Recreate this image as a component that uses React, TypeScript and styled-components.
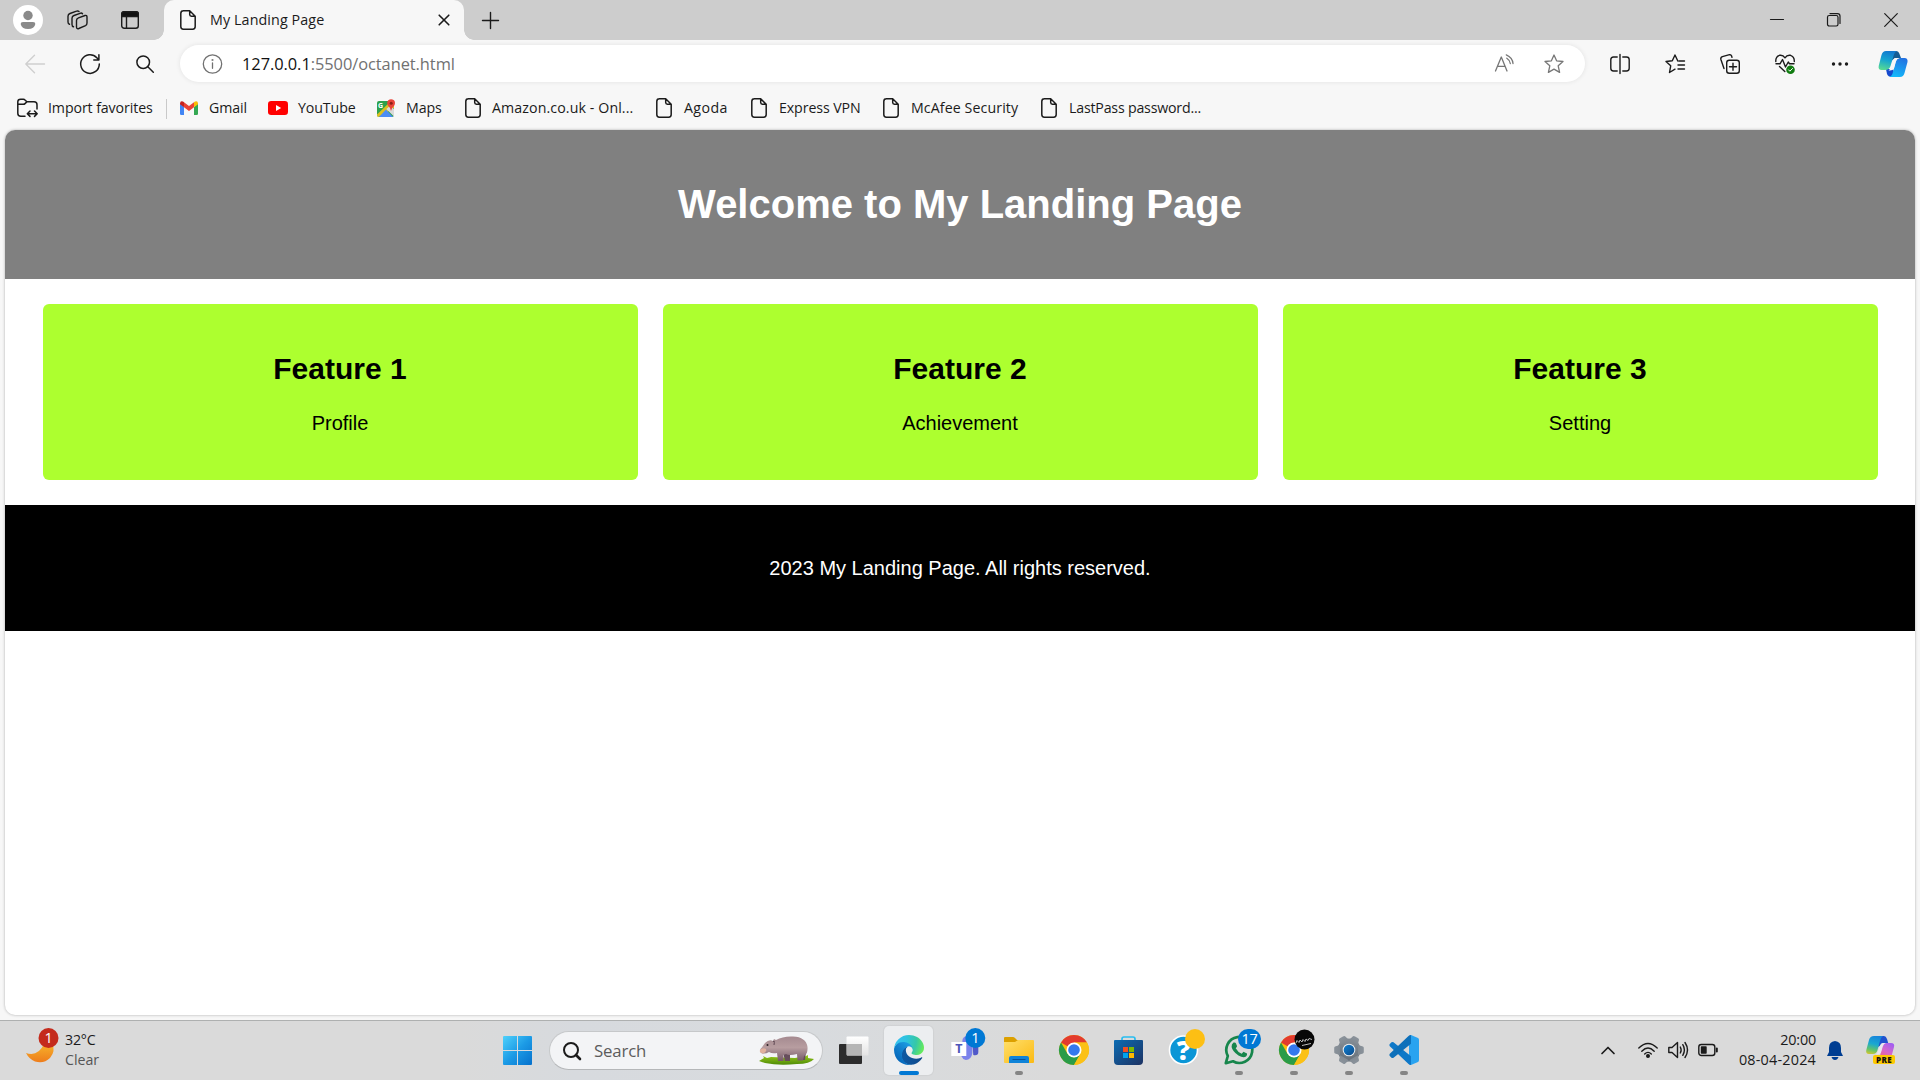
import React from 'react';
import styled, { createGlobalStyle } from 'styled-components';

const GlobalStyle = createGlobalStyle`
  html, body { margin: 0; padding: 0; background: #f7f7f7; }
  * { box-sizing: border-box; }
  svg { display: block; flex: none; overflow: visible; }
`;

const ui = `'Open Sans', 'Noto Sans', sans-serif`;

const Screen = styled.div`
  width: 1920px;
  height: 1080px;
  overflow: hidden;
  display: flex;
  flex-direction: column;
  font-family: ${ui};
  color: #1b1b1b;
`;

/* ---------- browser chrome ---------- */

const TabStrip = styled.div`
  height: 40px;
  flex: none;
  background: #cdcdcd;
  display: flex;
  align-items: center;
`;

const Avatar = styled.div`
  width: 30px;
  height: 30px;
  margin-left: 13px;
  border-radius: 50%;
  background: #fff;
  display: grid;
  place-items: center;
`;

const Slot = styled.div<{ $w: number }>`
  width: ${(p) => p.$w}px;
  height: 100%;
  flex: none;
  display: flex;
  align-items: center;
  justify-content: center;
`;

const Tab = styled.div`
  position: relative;
  width: 300px;
  height: 40px;
  margin-left: 8px;
  padding: 0 13px 0 16px;
  display: flex;
  align-items: center;
  background: #f7f7f7;
  border-radius: 10px 10px 0 0;
  &::before, &::after {
    content: '';
    position: absolute;
    bottom: 0;
    width: 10px;
    height: 10px;
  }
  &::before {
    left: -10px;
    background: radial-gradient(circle at 0 0, transparent 9.5px, #f7f7f7 10px);
  }
  &::after {
    right: -10px;
    background: radial-gradient(circle at 100% 0, transparent 9.5px, #f7f7f7 10px);
  }
`;

const TabTitle = styled.span`
  flex: 1;
  margin-left: 14px;
  padding-bottom: 2px;
  font-size: 14.3px;
  letter-spacing: 0.1px;
  white-space: nowrap;
`;

const WindowControls = styled.div`
  margin-left: auto;
  height: 100%;
  display: flex;
`;

const Toolbar = styled.div`
  height: 47px;
  flex: none;
  display: flex;
  align-items: center;
  background: #f7f7f7;
`;

const NavButtons = styled.div`
  width: 180px;
  height: 100%;
  padding-left: 7px;
  display: flex;
`;

const AddressBar = styled.div`
  width: 1405px;
  height: 37px;
  flex: none;
  border-radius: 19px;
  background: #fff;
  box-shadow: 0 0 5px rgba(0, 0, 0, 0.09);
  display: flex;
  align-items: center;
  padding: 0 6px 0 22px;
`;

const Url = styled.div`
  flex: 1;
  margin-left: 20px;
  font-size: 16.4px;
  letter-spacing: -0.05px;
  color: #717171;
  b { font-weight: 400; color: #111; }
`;

const ToolbarActions = styled.div`
  height: 100%;
  padding-left: 7px;
  display: flex;
`;

const FavoritesBar = styled.div`
  height: 43px;
  flex: none;
  padding-left: 17px;
  display: flex;
  align-items: center;
  background: #f7f7f7;
  > div > svg { margin-top: -1px; }
`;

const Favorite = styled.div<{ $w: number; $gap: number; $ls?: number }>`
  width: ${(p) => p.$w}px;
  flex: none;
  display: flex;
  align-items: center;
  font-size: 14.2px;
  letter-spacing: ${(p) => p.$ls ?? -0.1}px;
  white-space: nowrap;
  > span { margin-left: ${(p) => p.$gap}px; padding-bottom: 2px; }
`;

const Divider = styled.i`
  width: 1px;
  height: 20px;
  margin-right: 13px;
  background: #c9c9c9;
`;

/* ---------- web page ---------- */

const Viewport = styled.div`
  height: 890px;
  flex: none;
  padding: 0 5px 5px;
  background: #f7f7f7;
`;

const Page = styled.main`
  height: 885px;
  border-radius: 10px;
  overflow: hidden;
  background: #fff;
  box-shadow: 0 0 3px rgba(0, 0, 0, 0.3);
  font-family: 'Liberation Sans', Arial, sans-serif;
  font-size: 20px;
  color: #000;
  text-align: center;
`;

const Hero = styled.header`
  height: 149px;
  padding: 25px;
  background: #808080;
  color: #fff;
  h1 { margin: 26px 0; font-size: 40px; line-height: 46px; }
`;

const Features = styled.section`
  height: 226px;
  padding: 25px 37px 25px 38px;
  display: grid;
  grid-template-columns: repeat(3, 1fr);
  gap: 25px;
`;

const Card = styled.article`
  padding: 25px 26px 25px 25px;
  border-radius: 6px;
  background: #adff2f;
  h2 { margin: 23px 0 26px; font-size: 30px; line-height: 34px; }
  p { margin: 0; line-height: 23px; }
`;

const PageFooter = styled.footer`
  height: 126px;
  padding: 51px 25px;
  background: #000;
  color: #fff;
  p { margin: 0; line-height: 24px; }
`;

/* ---------- taskbar ---------- */

const Taskbar = styled.footer`
  height: 60px;
  flex: none;
  border-top: 1px solid #aeb0b0;
  background: linear-gradient(90deg, #dadada 0, #dadada 24%, #d7dade 30%, #d8dbde 42%, #dadada 55%, #dadada 100%);
  display: flex;
  align-items: center;
`;

const Weather = styled.div`
  width: 503px;
  padding: 0 0 1px 26px;
  display: flex;
  align-items: center;
  gap: 11px;
  font-size: 14.2px;
  line-height: 20px;
  letter-spacing: -0.2px;
  > svg { margin-top: -2px; }
  span { display: block; }
  span + span { color: #555; letter-spacing: 0; }
`;

const SearchBox = styled.div`
  width: 274px;
  height: 39px;
  margin: 0 16px 0 17px;
  padding: 0 8px 0 13px;
  border: 1px solid #c6c8ca;
  border-bottom-color: #b5b7b9;
  border-radius: 20px;
  background: #f3f4f6;
  display: flex;
  align-items: center;
  span { flex: 1; margin-left: 13px; font-size: 16.8px; letter-spacing: -0.15px; color: #5c5c5c; }
`;

const Apps = styled.div`
  margin-left: 12px;
  height: 59px;
  display: flex;
`;

const AppButton = styled.div<{ $state?: 'active' | 'open' }>`
  position: relative;
  width: 49px;
  height: 49px;
  margin: 5px 3px;
  padding-bottom: 1px;
  border-radius: 5px;
  display: grid;
  place-items: center;
  background: ${(p) => (p.$state === 'active' ? '#eceef0' : 'transparent')};
  box-shadow: ${(p) => (p.$state === 'active' ? '0 0 1px 1px rgba(0,0,0,.04)' : 'none')};
  &::after {
    content: '';
    position: absolute;
    bottom: 0;
    left: 50%;
    transform: translateX(-50%);
    height: 4px;
    border-radius: 2px;
    width: ${(p) => (p.$state === 'active' ? 20 : p.$state ? 8 : 0)}px;
    background: ${(p) => (p.$state === 'active' ? '#0078d4' : '#858585')};
  }
`;

const Tray = styled.div`
  margin-left: auto;
  padding: 0 25px 1px 0;
  display: flex;
  align-items: center;
`;

const Clock = styled.div`
  width: 93px;
  margin-right: 11px;
  padding-bottom: 1px;
  text-align: right;
  font-size: 14.4px;
  line-height: 20px;
  white-space: nowrap;
  span { display: block; letter-spacing: -0.2px; }
  span + span { letter-spacing: 0.2px; }
`;

/* ---------- icons ---------- */

type IconProps = { w?: number; h?: number; c?: string; s?: number; children: React.ReactNode };
const Icon = ({ w = 20, h = 20, c = '#1b1b1b', s = 1.4, children }: IconProps) => (
  <svg width={w} height={h} viewBox={`0 0 ${w} ${h}`} fill="none" stroke={c} strokeWidth={s} strokeLinecap="round" strokeLinejoin="round">
    {children}
  </svg>
);

const DocIcon = () => (
  <Icon w={16} s={1.5}>
    <path d="M3.2.8H9.7L15.2 6.3V16.6Q15.2 19.2 12.6 19.2H3.4Q.8 19.2.8 16.6V3.4Q.8.8 3.4.8M9.7.9V4.6Q9.7 6.3 11.4 6.3H15.1" />
  </Icon>
);

const starPath = 'M10 1 12.6 6.8 19 7.5 14.2 11.8 15.6 18.4 10 15.1 4.4 18.4 5.8 11.8 1 7.5 7.4 6.8Z';

const ChromeLogo = () => (
  <svg width="30" height="30" viewBox="0 0 30 30">
    <circle cx="15" cy="15" r="15" fill="#fbbc0a" />
    <path d="M15 15 2 7.5A15 15 0 0 1 28 7.5L15 7.5Z" fill="#e33b2e" />
    <path d="M2 7.5A15 15 0 0 0 15 30L21.500 18.800 15 22.500 8.500 18.800Z" fill="#2a9c48" />
    <path d="M15 30A15 15 0 0 0 28 7.5H15L21.500 18.800Z" fill="#fbc116" />
    <circle cx="15" cy="15" r="7.5" fill="#fff" />
    <circle cx="15" cy="15" r="5.8" fill="#3478ed" />
  </svg>
);

const EdgeLogo = () => (
  <svg width="30" height="30" viewBox="0 0 256 256">
    <defs>
      <linearGradient id="e1" x1="63" y1="177" x2="241" y2="177" gradientUnits="userSpaceOnUse"><stop stopColor="#0c59a4" /><stop offset="1" stopColor="#114a8b" /></linearGradient>
      <linearGradient id="e2" x1="157" y1="100" x2="46" y2="221" gradientUnits="userSpaceOnUse"><stop stopColor="#1b9de2" /><stop offset=".5" stopColor="#1180ce" /><stop offset="1" stopColor="#0669bc" /></linearGradient>
      <radialGradient id="e3" cx="26" cy="45" r="235" gradientUnits="userSpaceOnUse"><stop stopColor="#35c1f1" /><stop offset=".35" stopColor="#2ec3df" /><stop offset=".7" stopColor="#36c8a7" /><stop offset="1" stopColor="#66eb5a" /></radialGradient>
    </defs>
    <path fill="url(#e1)" d="M235.700 190.500a93.700 93.700 0 0 1-10.600 4.700 101.900 101.900 0 0 1-35.900 6.500c-47.300 0-88.500-32.500-88.500-74.300a31.500 31.500 0 0 1 16.400-27.300c-42.800 1.800-53.800 46.400-53.800 72.500 0 73.900 68.100 81.400 82.800 81.400 7.900 0 19.800-2.300 27-4.600l1.300-.4a128.300 128.300 0 0 0 66.600-52.800 4 4 0 0 0-5.300-5.700Z" />
    <path fill="url(#e2)" d="M105.700 241.400a79.200 79.200 0 0 1-22.700-21.300 80.700 80.700 0 0 1 29.500-120c3.200-1.500 8.500-4.100 15.600-4a32.400 32.400 0 0 1 25.700 13 31.900 31.900 0 0 1 6.300 18.700c0-.2 24.500-79.600-80-79.600C36.200 48.200.1 89.900.1 126.400a130.200 130.200 0 0 0 12.100 56 128 128 0 0 0 156.400 67.100 75.500 75.500 0 0 1-62.800-8Z" />
    <path fill="url(#e3)" d="M152.300 148.900c-.8 1-3.300 2.500-3.300 5.700 0 2.600 1.700 5.100 4.700 7.200 14.400 10 41.500 8.700 41.600 8.700a59.600 59.600 0 0 0 30.300-8.300 61.400 61.400 0 0 0 30.400-52.900c.3-22.400-8-37.300-11.300-43.900C223.500 23.900 177.700 0 128 0A128 128 0 0 0 0 126.200c.5-36.500 36.800-66 80-66 3.500 0 23.500.3 42 10.100 16.300 8.600 24.900 18.900 30.800 29.200 6.200 10.700 7.300 24.100 7.300 29.500s-2.700 13.300-7.800 19.900Z" />
  </svg>
);

const CopilotLogo = () => (
  <svg width="30" height="26" viewBox="0 0 30 26">
    <defs>
      <linearGradient id="c1" x1="10" y1="0" x2="5" y2="20" gradientUnits="userSpaceOnUse"><stop stopColor="#1279cf" /><stop offset=".45" stopColor="#16a5d0" /><stop offset="1" stopColor="#5fe08c" /></linearGradient>
      <linearGradient id="c2" x1="26" y1="7" x2="19" y2="26" gradientUnits="userSpaceOnUse"><stop stopColor="#2470e0" /><stop offset="1" stopColor="#14b8fa" /></linearGradient>
    </defs>
    <path d="M15 0H18Q20.500 0 21.500 3L23 7H17L12 11 9 6Z" fill="#145c94" />
    <path d="M8 18H15L17 24Q17 26 14 26 10 26 9 23Z" fill="#1649ce" />
    <path d="M8 0H19Q16.500 1 15.500 5L12.500 15Q11.300 19 7 19H3.500Q0 19 .7 15L3.500 4Q4.700 0 8 0Z" fill="url(#c1)" />
    <path d="M22 7H26.500Q30 7 29.500 11L26.500 22Q25.500 26 22 26H11Q14 25.500 15 21L17.500 11Q18.500 7 22 7Z" fill="url(#c2)" />
    <path d="M17.500 7H21.500Q18.800 7.500 18 10.500L16 17.500Q15 19.500 12 19.500H10.500Q12.500 18 13.200 15.500L15 9.500Q15.700 7 17.500 7Z" fill="#f7f7f7" />
  </svg>
);

const CopilotPreview = () => (
  <svg width="29" height="28" viewBox="0 0 29 28">
    <defs>
      <linearGradient id="p1" x1="10" y1="0" x2="5" y2="20" gradientUnits="userSpaceOnUse"><stop stopColor="#1685db" /><stop offset=".4" stopColor="#1ba8d0" /><stop offset=".7" stopColor="#62c46b" /><stop offset="1" stopColor="#f4c71d" /></linearGradient>
      <linearGradient id="p2" x1="25" y1="7" x2="15" y2="24" gradientUnits="userSpaceOnUse"><stop stopColor="#a05df2" /><stop offset=".5" stopColor="#d767c9" /><stop offset="1" stopColor="#f5656e" /></linearGradient>
    </defs>
    <path d="M13 0H18Q20 0 21 3L22.500 8H17L12 11Z" fill="#2052cf" />
    <path d="M8 0H17Q15 1 14 5L11.500 14Q10.500 18 7 18H3Q-.5 18 .3 14L3 4Q4 0 8 0Z" fill="url(#p1)" />
    <path d="M20 7H25Q29 7 28 11L25 22H10L14 20 16 11Q17 7 20 7Z" fill="url(#p2)" />
    <path d="M16.500 7H20Q17.500 7.500 16.800 10.500L15 16.500Q14 18.500 11.500 18.500H10Q11.500 17 12.200 14.500L14 9.500Q14.700 7 16.500 7Z" fill="#e9e6ee" />
    <rect x="7" y="19" width="22" height="9" rx="2" fill="#fcc900" />
    <text x="18" y="26.600" textAnchor="middle" fontFamily="Open Sans, sans-serif" fontWeight="800" fontSize="8" letterSpacing=".4" fill="#15120a">PRE</text>
  </svg>
);

const Hippo = () => (
  <svg width="55" height="29" viewBox="0 0 55 29">
    <defs>
      <linearGradient id="hp" x1="0" y1="0" x2="0" y2="1"><stop stopColor="#a58a90" /><stop offset=".45" stopColor="#b79da0" /><stop offset="1" stopColor="#755a68" /></linearGradient>
      <linearGradient id="gr" x1="0" y1="0" x2="0" y2="1"><stop stopColor="#9acb1c" /><stop offset="1" stopColor="#4e8a07" /></linearGradient>
    </defs>
    <path d="M0 25 5 22 4 20 8 22 12 21 36 22 41 21 43 19 45 21 49 19 49 22 55 23Q51 28 38 28 20 30 6 27Z" fill="url(#gr)" />
    <path d="M38 16H47L46 24H41ZM24 16H31V25H26Z" fill="#674e5c" />
    <path d="M14 5 15 3 17 4Q24 0 34 .5 47 1 48.500 11 49 18 45 20L44 24.500H38.500L38 18Q30 20 27 18L24.500 19V25H19L18 17Q13 18 10 16 7 18 3 17.500 0 16 1.500 13 4 10 6 7 10 3 14 5Z" fill="url(#hp)" />
    <path d="M1 14Q4 11 7 13 8 16 4 17.500 0 17 1 14Z" fill="#e2b19e" />
    <circle cx="8.500" cy="9" r="1" fill="#2d2329" />
    <path d="M14 6Q16 3 15 9" stroke="#5f4853" fill="none" />
  </svg>
);

const Badge = ({ x, y, rx = 10, fill = '#0078d4', label }: { x: number; y: number; rx?: number; fill?: string; label?: string }) => (
  <g>
    <rect x={x - rx} y={y - 10} width={rx * 2} height={20} rx={10} fill={fill} />
    {label && <text x={x} y={y + 5} textAnchor="middle" fontFamily="Open Sans, sans-serif" fontSize="14.500" letterSpacing="-.3" fill="#fff">{label}</text>}
  </g>
);

const Favicons = {
  import: (
    <Icon w={21} s={1.5}>
      <path d="M8 18.200H3.800Q.8 18.200.8 15.200V3.800Q.8 1.200 3.600 1.200H6.500Q7.400 1.200 8 1.900L9.800 3.800H17Q20 3.800 20 6.800V11M.9 6.300H6.400Q7.300 6.300 8 5.600L9.800 3.900M10.500 15.700H20M13 13 10.300 15.700 13 18.400M17.500 13 20.200 15.700 17.500 18.400" />
    </Icon>
  ),
  gmail: (
    <svg width="18" height="14" viewBox="0 0 18 14">
      <path d="M0 2.500V12.700Q0 14 1.300 14H4V6Z" fill="#4285f4" />
      <path d="M18 2.500V12.700Q18 14 16.700 14H14V6Z" fill="#34a853" />
      <path d="M0 2.500Q.2-.7 3 .5L4 1.200V6.200L0 3.200Z" fill="#c5221f" />
      <path d="M18 2.500Q17.800-.7 15 .5L14 1.200V6.200L18 3.200Z" fill="#fbbc04" />
      <path d="M4 1.200 9 5 14 1.200V6.200L9 10 4 6.200Z" fill="#ea4335" />
    </svg>
  ),
  youtube: (
    <svg width="20" height="14" viewBox="0 0 20 14"><rect width="20" height="14" rx="3.200" fill="#f00" /><path d="M8 4 13.200 7 8 10Z" fill="#fff" /></svg>
  ),
  maps: (
    <svg width="19" height="19" viewBox="0 0 19 19">
      <rect y="2" width="17" height="16" rx="2" fill="#2da14d" />
      <path d="M0 15.500 13 3 17 7V9L1.800 18Q0 18 0 16Z" fill="#fbc517" opacity=".85" />
      <path d="M2 18 9 10.500 16 18Z" fill="#4a8cf5" />
      <path d="M9.300 10 17 17.500V10L13 7Z" fill="#dadada" />
      <text x="1" y="8.500" fontFamily="Open Sans, sans-serif" fontSize="7" fontWeight="700" fill="#fff">G</text>
      <path d="M14 12Q13.800 9 11.300 7 9 4 11.300 1.300 14-1 17 1.300 19 4 17 7 14.300 9 14 12Z" fill="#e8453a" />
      <circle cx="14.200" cy="4.200" r="1.500" fill="#8d2018" />
    </svg>
  ),
};

const favorites = [
  { label: 'Gmail', icon: Favicons.gmail, w: 88, gap: 11 },
  { label: 'YouTube', icon: Favicons.youtube, w: 109, gap: 10 },
  { label: 'Maps', icon: Favicons.maps, w: 88, gap: 10 },
  { label: 'Amazon.co.uk - Onl...', icon: <DocIcon />, w: 191, gap: 11, ls: 0.1 },
  { label: 'Agoda', icon: <DocIcon />, w: 95, gap: 12, ls: 0.4 },
  { label: 'Express VPN', icon: <DocIcon />, w: 132, gap: 12 },
  { label: 'McAfee Security', icon: <DocIcon />, w: 158, gap: 12, ls: 0.1 },
  { label: 'LastPass password...', icon: <DocIcon />, w: 180, gap: 12, ls: -0.2 },
];

const features = [
  { title: 'Feature 1', text: 'Profile' },
  { title: 'Feature 2', text: 'Achievement' },
  { title: 'Feature 3', text: 'Setting' },
];

const Browser = () => (
  <>
    <TabStrip>
      <Avatar>
        <svg width="16" height="20" viewBox="0 0 16 20" fill="#8a8a8a"><circle cx="8" cy="5.500" r="4.700" /><path d="M3 12H13Q15.500 12 15.300 14 14.500 19 8 19 1.500 19 .7 14 .5 12 3 12Z" /></svg>
      </Avatar>
      <Slot $w={69}>
        <Icon w={21} h={20}>
          <path d="M11.500 7.800 18 5.500Q20 5 20 7V13Q20 15 18.500 15.700L11.800 18.500Q9.500 19.300 9.500 17V10.500Q9.500 8.600 11.500 7.800ZM15.500 3.700Q14.700 2.700 13 3.300L7 5.500Q5 6.300 5 8.300V14.500Q5 16.500 6.500 16.800M12 1.500Q11 .6 9.500 1.200L3 3.500Q1 4.300 1 6.300V12Q1 14 2.500 14.300" />
        </Icon>
      </Slot>
      <Slot $w={36}>
        <Icon w={18} h={18}><rect x=".7" y=".7" width="16.600" height="16.600" rx="2.500" /><path d="M.7 5.500V3Q.7.700 3 .7H15Q17.300.7 17.300 3V5.500Z" fill="#111" /><path d="M5.500 5V17" /></Icon>
      </Slot>
      <Slot $w={8} />
      <Tab>
        <DocIcon />
        <TabTitle>My Landing Page</TabTitle>
        <Icon w={14} h={14} s={1.6}><path d="M2.200 2.200 11.800 11.800M11.800 2.200 2.200 11.800" /></Icon>
      </Tab>
      <Slot $w={53}><Icon w={17} h={17}><path d="M8.500.5V16.500M.5 8.500H16.500" /></Icon></Slot>
      <WindowControls>
        <Slot $w={57}><Icon w={14} h={14} s={1.200}><path d="M.5 6.500H13.500" /></Icon></Slot>
        <Slot $w={57}><Icon w={14} h={14} s={1.200}><rect x=".5" y="2.500" width="10.500" height="10.500" rx="1.700" /><path d="M3 .6H10.500Q13 .6 13 3.100V10.500" /></Icon></Slot>
        <Slot $w={58}><Icon w={14} h={14} s={1.200}><path d="M.7.7 13.300 13.300M13.300.7.7 13.300" /></Icon></Slot>
      </WindowControls>
    </TabStrip>

    <Toolbar>
      <NavButtons>
        <Slot $w={56}><Icon c="#cfcfcf"><path d="M19.500 10H.8M9.500 1.300.8 10 9.500 18.700" /></Icon></Slot>
        <Slot $w={54}><Icon s={1.500}><path d="M19.300 10A9.300 9.300 0 1 1 16.800 3.700L18.800 5.800M18.900.8V5.900H13.800" /></Icon></Slot>
        <Slot $w={55}><Icon w={18} h={18} s={1.500}><circle cx="7.200" cy="7.200" r="6.300" /><path d="M11.800 11.800 17.300 17.300" /></Icon></Slot>
      </NavButtons>
      <AddressBar>
        <Icon c="#717171" s={1.300}><circle cx="10.500" cy="10" r="9.200" /><path d="M10.500 9V14.300" /><circle cx="10.500" cy="6" r=".4" /></Icon>
        <Url><b>127.0.0.1</b>:5500/octanet.html</Url>
        <Slot $w={50}>
          <Icon c="#767676" s={1.300}><path d="M1.500 17 7.300 3 13 17M3.500 12.300H11M12.300.8Q18.500 3.500 19 9.500M12.800 4.200Q15.800 6 16.300 9.500" /></Icon>
        </Slot>
        <Slot $w={50}><Icon c="#767676" s={1.300}><path d={starPath} /></Icon></Slot>
      </AddressBar>
      <ToolbarActions>
        <Slot $w={55}><Icon><path d="M7.200 3H3.500Q.8 3 .8 5.700V14.300Q.8 17 3.500 17H7.200M12.800 3H16.500Q19.200 3 19.200 5.700V14.300Q19.200 17 16.500 17H12.800M10 .5V19.500" /></Icon></Slot>
        <Slot $w={55}><Icon><path d="M12.800 7 10 1 7.300 6.800 1 7.500 5.700 11.800 4.500 18.500 10 15.200M14 7H19.500M13 11H19.500M13 15H19.500" /></Icon></Slot>
        <Slot $w={55}><Icon><rect x="6.700" y="6.200" width="12.600" height="13" rx="2.500" /><path d="M13 9.200V16.200M9.500 12.700H16.500M4 14.500 .9 5.500Q.3 3.500 2.400 2.700L9.500.7Q11.500.3 12 3.300" /></Icon></Slot>
        <Slot $w={55}>
          <Icon><path d="M.8 7.500Q.5 2.500 4.500 1.300 8 .7 10 3.800 12 .7 15.500 1.300 19.500 2.500 19.300 7.500M1 9.800H5L7.500 5.500 10.500 13 13.300 8 14.500 9.800H19M4.500 12.500 9.800 17.500" /><circle cx="15.500" cy="15.700" r="4.300" fill="#107c10" stroke="none" /><path d="M13.600 15.900 14.900 17.200 17.500 14.500" stroke="#fff" strokeWidth="1" /></Icon>
        </Slot>
        <Slot $w={55}><Icon w={16}><g fill="#1b1b1b" stroke="none"><circle cx="1.500" cy="10" r="1.700" /><circle cx="8" cy="10" r="1.700" /><circle cx="14.500" cy="10" r="1.700" /></g></Icon></Slot>
        <Slot $w={51}><CopilotLogo /></Slot>
      </ToolbarActions>
    </Toolbar>

    <FavoritesBar>
      <Favorite $w={149} $gap={10}>{Favicons.import}<span>Import favorites</span></Favorite>
      <Divider />
      {favorites.map((f) => (
        <Favorite key={f.label} $w={f.w} $gap={f.gap} $ls={f.ls}>{f.icon}<span>{f.label}</span></Favorite>
      ))}
    </FavoritesBar>
  </>
);

const gearTeeth = [0, 60, 120, 180, 240, 300];

const WindowsTaskbar = () => (
  <Taskbar>
    <Weather>
      <svg width="28" height="37" viewBox="0 0 28 37">
        <defs><linearGradient id="mn" x1="0" y1="0" x2="0" y2="1"><stop stopColor="#f7b52b" /><stop offset="1" stopColor="#ee7d1c" /></linearGradient></defs>
        <path d="M0 22Q12 26 18 13L26 12Q30 20 24 27 18 33 9 30.500 3 28 0 22Z" fill="url(#mn)" />
        <Badge x={22.500} y={7} fill="#c42b1c" label="1" />
      </svg>
      <div><span>32°C</span><span>Clear</span></div>
    </Weather>
    <svg width="29" height="29" viewBox="0 0 29 29">
      <defs><linearGradient id="wn" x1="0" y1="0" x2="29" y2="29" gradientUnits="userSpaceOnUse"><stop stopColor="#4fd1fb" /><stop offset=".5" stopColor="#1c9be6" /><stop offset="1" stopColor="#0670cc" /></linearGradient></defs>
      <path d="M1 0H14V14H0V1Q0 0 1 0ZM15 0H28Q29 0 29 1V14H15ZM0 15H14V29H1Q0 29 0 28ZM15 15H29V28Q29 29 28 29H15Z" fill="url(#wn)" />
    </svg>
    <SearchBox>
      <Icon w={18} h={18} s={2}><circle cx="8" cy="8" r="7" /><path d="M13 13 17 17" strokeWidth="2.600" /></Icon>
      <span>Search</span>
      <Hippo />
    </SearchBox>
    <svg width="30" height="29" viewBox="0 0 30 29">
      <defs><linearGradient id="tv" x1="0" y1="0" x2="0" y2="1"><stop stopColor="#fff" /><stop offset="1" stopColor="#e4e4e4" /></linearGradient></defs>
      <rect y="8" width="23" height="20" rx="1" fill="#2c2c2c" />
      <rect x="7.500" y=".5" width="22" height="19" rx="1" fill="url(#tv)" />
      <path d="M8 8H23V19.500H8Z" fill="#b5b5b5" />
    </svg>
    <Apps>
      <AppButton $state="active"><EdgeLogo /></AppButton>
      <AppButton>
        <svg width="36" height="36" viewBox="-4.300 5 36 36">
          <circle cx="17" cy="14" r="5" fill="#7b83eb" />
          <path d="M22 16H28V25Q28 29 23 28Z" fill="#5059c9" />
          <path d="M11 16H22V26Q21 33 15.500 33 12 32 11 29Z" fill="#7b83eb" />
          <rect x="1" y="15" width="15" height="14" fill="#fff" />
          <text x="8.500" y="26.300" textAnchor="middle" fontFamily="Open Sans, sans-serif" fontWeight="700" fontSize="12.500" fill="#4e56b8">T</text>
          <Badge x={25} y={11} label="1" />
        </svg>
      </AppButton>
      <AppButton $state="open">
        <svg width="30" height="28" viewBox="0 0 30 28">
          <defs><linearGradient id="fe" x1="0" y1="0" x2="1" y2="1"><stop stopColor="#ffdf6b" /><stop offset="1" stopColor="#fbba13" /></linearGradient></defs>
          <path d="M1 1H9Q10 1 11 2L13 4H29V10H0V2Q0 1 1 1Z" fill="#dca000" />
          <path d="M0 6H11L14 4H29Q30 4 30 5V26Q30 27 29 27H1Q0 27 0 26Z" fill="url(#fe)" />
          <path d="M5 27V22Q5 20 7 20H23Q25 20 25 22V27Z" fill="#0f83d8" /><path d="M8.500 23.500H21.500" stroke="#07529a" />
        </svg>
      </AppButton>
      <AppButton><ChromeLogo /></AppButton>
      <AppButton>
        <svg width="29" height="30" viewBox="0 0 29 30">
          <defs><linearGradient id="st" x1="0" y1="0" x2="1" y2="1"><stop stopColor="#0b6cb4" /><stop offset="1" stopColor="#1d3262" /></linearGradient></defs>
          <path d="M8 6V4Q8 2 10 2H19Q21 2 21 4V6" stroke="#28bdf0" strokeWidth="1.700" fill="none" />
          <path d="M1 5H28Q29 5 29 6V26Q29 30 25 30H4Q0 30 0 26V6Q0 5 1 5Z" fill="url(#st)" />
          <path d="M9 12H14V17H9Z" fill="#f25022" /><path d="M15 12H20V17H15Z" fill="#7fba00" /><path d="M9 18H14V23H9Z" fill="#00a4ef" /><path d="M15 18H20V23H15Z" fill="#ffb900" />
        </svg>
      </AppButton>
      <AppButton>
        <svg width="30" height="30" viewBox="0 0 30 30">
          <circle cx="14.500" cy="15" r="14" fill="#0b96d6" stroke="#fff" strokeWidth="1.600" />
          <text x="14.500" y="25" textAnchor="middle" fontFamily="Open Sans, sans-serif" fontWeight="800" fontSize="27" fill="#fff">?</text>
          <Badge x={26} y={4} fill="#fdbf14" />
        </svg>
      </AppButton>
      <AppButton $state="open">
        <svg width="30" height="30" viewBox="0 0 30 30">
          <path d="M1.800 28.200 3.800 21A13 13 0 1 1 9 26.300Z" fill="none" stroke="#17864c" strokeWidth="2.700" strokeLinejoin="round" />
          <path d="M9.500 7.500Q11.500 7 12 8.500L13 11Q13.200 12 11.700 13.300 14 17.500 17.700 18.700L19.500 16.800 23 18.500Q23.500 20 22 21.500 19.500 23.500 14.500 20.500 8.500 16.500 7.600 12 7.300 9 9.500 7.500Z" fill="#17864c" />
          <Badge x={25.500} y={4} rx={11.500} label="17" />
        </svg>
      </AppButton>
      <AppButton $state="open">
        <svg width="30" height="30" viewBox="0 0 30 30">
          <ChromeLogo />
          <Badge x={25.500} y={4.500} fill="#080808" />
          <path d="M17 11 18 8.500 20 10.500 21 8 23 10 24 7.500 26 9.500 27 7 29 8.500 30 6.500 33 7.500M23 13.500 32 11.500" transform="translate(0 -3)" fill="none" stroke="#bbb" strokeWidth="1" />
        </svg>
      </AppButton>
      <AppButton $state="open">
        <svg width="30" height="30" viewBox="-15 -15 30 30">
          <defs>
            <linearGradient id="gg" x1="0" y1="-15" x2="0" y2="15" gradientUnits="userSpaceOnUse"><stop stopColor="#8b939b" /><stop offset="1" stopColor="#626b74" /></linearGradient>
            <linearGradient id="gb" x1="0" y1="0" x2="1" y2="1"><stop stopColor="#1180d2" /><stop offset="1" stopColor="#0a4a8a" /></linearGradient>
          </defs>
          <g fill="url(#gg)">
            <circle r="11.500" />
            {gearTeeth.map((a) => <path key={a} d="M-5-9 -3.500-14Q-3-15-1.500-14.800H1.500Q3-15 3.500-14L5-9Z" transform={`rotate(${a + 30})`} />)}
          </g>
          <circle r="6.300" fill="#e9edf0" /><circle r="5.300" fill="url(#gb)" />
        </svg>
      </AppButton>
      <AppButton $state="open">
        <svg width="30" height="30" viewBox="0 0 30 30">
          <path d="M22 0 29 3Q30 3.500 30 5V25Q30 26.500 29 27L22 30Q20.500 30 20 28.500V2Q20.500 0 22 0Z" fill="#29a3f0" />
          <path d="M22 30Q20.500 30 19.500 29L.8 11.200Q-.2 10 .8 9L2.500 7.300Q3.500 6.700 4.500 7.300L22 21.300Z" fill="#0e78c8" />
          <path d="M22 0Q20.500 0 19.500 1L.8 18.800Q-.2 20 .8 21L2.500 22.700Q3.500 23.300 4.500 22.700L22 8.700Z" fill="#0d70ba" />
        </svg>
      </AppButton>
    </Apps>
    <Tray>
      <Slot $w={40}><Icon w={14} h={14} s={1.700}><path d="M1 10.500 7 4.500 13 10.500" /></Icon></Slot>
      <Slot $w={5} />
      <Slot $w={30}><Icon><path d="M.8 8Q10-1 19.200 8M3.800 11.200Q10 5 16.200 11.200M6.700 14Q10 10.700 13.300 14" /><circle cx="10" cy="16" r="1.300" fill="#1b1b1b" /></Icon></Slot>
      <Slot $w={30}><Icon><path d="M.8 7.500H4L9.500 2.500V17.500L4 12.500H.8ZM12.300 7Q14 10 12.300 13M14.800 4.700Q18 10 14.800 15.300M17 2.500Q22 10 17 17.500" /></Icon></Slot>
      <Slot $w={30}><Icon><rect x=".8" y="4.500" width="16" height="11" rx="2.500" /><path d="M3.500 7H8V13H3.500Z" fill="#1b1b1b" /><path d="M18.800 8.500V11.500" strokeWidth="2" /></Icon></Slot>
      <Clock><span>20:00</span><span>08-04-2024</span></Clock>
      <svg width="16" height="19" viewBox="0 0 16 19" fill="#003e92"><path d="M8 0Q14 .5 14 7V11L16 15H0L2 11V7Q2 .5 8 0ZM4.500 16H11.500Q10.500 19 8 19 5.500 19 4.500 16Z" /></svg>
      <Slot $w={23} />
      <CopilotPreview />
    </Tray>
  </Taskbar>
);

export default function App() {
  return (
    <Screen>
      <GlobalStyle />
      <Browser />
      <Viewport>
        <Page>
          <Hero><h1>Welcome to My Landing Page</h1></Hero>
          <Features>
            {features.map((f) => (
              <Card key={f.title}><h2>{f.title}</h2><p>{f.text}</p></Card>
            ))}
          </Features>
          <PageFooter><p>2023 My Landing Page. All rights reserved.</p></PageFooter>
        </Page>
      </Viewport>
      <WindowsTaskbar />
    </Screen>
  );
}
